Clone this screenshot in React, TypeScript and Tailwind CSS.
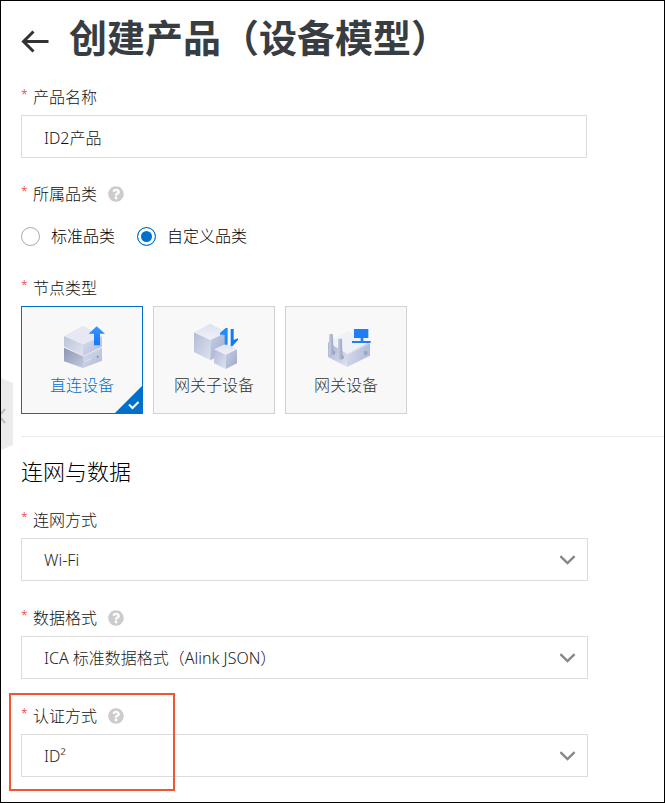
import { useState } from 'react';
import type { ReactNode } from 'react';
import { FaQuestionCircle } from 'react-icons/fa';

const ArrowLeft = () => (
  <svg width="28" height="24" viewBox="0 0 28 24" fill="none" stroke="#333" strokeWidth="3">
    <path d="M27.5 12.5H2.5M12.5 2.5L2.5 12.5l10 10" />
  </svg>
);

const DirectIcon = () => (
  <svg width="48" height="48" viewBox="144 66 144 144" className="overflow-visible">
    <defs>
      <linearGradient id="d-left" x1="0" y1="0" x2="1" y2="1">
        <stop offset="0" stopColor="#bcc4d9" />
        <stop offset="1" stopColor="#e0e4f0" />
      </linearGradient>
      <linearGradient id="d-right" x1="0" y1="0" x2="1" y2="1">
        <stop offset="0" stopColor="#dbe0ef" />
        <stop offset="1" stopColor="#aeb8d6" />
      </linearGradient>
      <linearGradient id="d-low" x1="0" y1="0" x2="1" y2="1">
        <stop offset="0" stopColor="#8c95b3" />
        <stop offset="1" stopColor="#c3cade" />
      </linearGradient>
      <linearGradient id="d-blue" x1="0" y1="0" x2="0" y2="1">
        <stop offset="0" stopColor="#3d95ff" />
        <stop offset="1" stopColor="#1477f5" />
      </linearGradient>
    </defs>
    <path d="M162 143l57 26v35l-57-20z" fill="url(#d-low)" />
    <path d="M276 143l-57 26v35l57-22z" fill="url(#d-right)" />
    <path d="M162 108l57 24v36l-57-28z" fill="url(#d-left)" />
    <path d="M276 108l-57 24v36l57-28z" fill="url(#d-right)" />
    <path d="M219 77l57 31-57 25-57-25z" fill="#e6e9f4" />
    <path d="M226 184l16-7" stroke="#eef1f8" strokeWidth="2" />
    <circle cx="263" cy="170" r="3" fill="#7f8bb0" />
    <path d="M260 79l25 22h-15v35h-18v-35h-16z" fill="url(#d-blue)" />
  </svg>
);

const SubDeviceIcon = () => (
  <svg width="48" height="48" viewBox="135 66 144 144" className="overflow-visible">
    <defs>
      <linearGradient id="s-left" x1="0" y1="0" x2="1" y2="1">
        <stop offset="0" stopColor="#b3bcd6" />
        <stop offset="1" stopColor="#dde2f0" />
      </linearGradient>
      <linearGradient id="s-right" x1="0" y1="0" x2="1" y2="1">
        <stop offset="0" stopColor="#c9d1e6" />
        <stop offset="1" stopColor="#9ba6c8" />
      </linearGradient>
      <linearGradient id="s-top" x1="0" y1="0" x2="0" y2="1">
        <stop offset="0" stopColor="#dde2f0" />
        <stop offset="1" stopColor="#eff1f8" />
      </linearGradient>
    </defs>
    <path d="M147 97l49 22v62l-49-25z" fill="url(#s-left)" />
    <path d="M244 97l-48 22v62l48-25z" fill="url(#s-right)" />
    <path d="M196 71l48 26-48 23-49-23z" fill="url(#s-top)" />
    <path d="M207 148l35 15v44l-35-17z" fill="url(#s-left)" />
    <path d="M276 148l-34 15v44l34-17z" fill="url(#s-right)" />
    <path d="M242 131l34 17-34 16-35-16z" fill="url(#s-top)" />
    <path d="M248 84v50h-9v-30h-14v-5l17-15z" fill="#1f8bff" />
    <path d="M257 87h9v33l13-5v5l-17 19h-5z" fill="#1479f5" />
  </svg>
);

const GatewayIcon = () => (
  <svg width="48" height="48" viewBox="132 66 144 144" className="overflow-visible">
    <defs>
      <linearGradient id="g-left" x1="0" y1="0" x2="1" y2="1">
        <stop offset="0" stopColor="#a9b2ce" />
        <stop offset="1" stopColor="#dfe3f1" />
      </linearGradient>
      <linearGradient id="g-right" x1="0" y1="0" x2="1" y2="0">
        <stop offset="0" stopColor="#cfd5e9" />
        <stop offset="1" stopColor="#b2bcda" />
      </linearGradient>
      <linearGradient id="g-ant" x1="0" y1="0" x2="1" y2="0">
        <stop offset="0" stopColor="#c9cfe2" />
        <stop offset="1" stopColor="#8a95b6" />
      </linearGradient>
    </defs>
    <path d="M150 126l57 35v40l-57-30z" fill="url(#g-left)" />
    <path d="M276 125l-69 36v40l69-34z" fill="url(#g-right)" />
    <path d="M211 93l65 32-69 36-57-35z" fill="#eff1f7" />
    <path d="M276 129l-69 36" stroke="#e8ebf5" strokeWidth="2" />
    <ellipse cx="263" cy="159" rx="6" ry="7" fill="#98a4c8" />
    <path d="M153 104q6-5 12 0l1 46q8 6 4 12-8 6-17 0z" fill="url(#g-ant)" />
    <path d="M180 118q6-5 12 0l1 46q7 6 3 12-8 5-16 0z" fill="url(#g-ant)" />
    <path d="M228 87h43v27h-15v9h22v6h-56v-6h26v-9h-20z" fill="#1f7df7" />
  </svg>
);

const nodeTypes = [
  { value: 'direct', label: '直连设备', icon: <DirectIcon /> },
  { value: 'sub', label: '网关子设备', icon: <SubDeviceIcon /> },
  { value: 'gateway', label: '网关设备', icon: <GatewayIcon /> },
];

const categories = [
  { value: 'standard', label: '标准品类' },
  { value: 'custom', label: '自定义品类' },
];

const LabelText = ({ children, help }: { children: ReactNode; help?: boolean }) => (
  <span className="flex h-6 items-center">
    <span className="w-3 pb-1 text-xs text-[#e8291b]">*</span>
    {children}
    {help && <FaQuestionCircle className="ml-[11px] size-4 text-[#ccc]" />}
  </span>
);

type SelectFieldProps = {
  id: string;
  label: string;
  option: string;
  help?: boolean;
};

const SelectField = ({ id, label, option, help }: SelectFieldProps) => (
  <div>
    <label htmlFor={id} className="block">
      <LabelText help={help}>{label}</LabelText>
    </label>
    <div className="mt-1.5 grid items-center">
      <select
        id={id}
        className="col-start-1 row-start-1 h-[43px] w-full appearance-none border border-[#dcdcdc] bg-white pr-10 pl-[22px] text-[#222] focus:outline-none"
      >
        <option>{option}</option>
      </select>
      <svg
        className="pointer-events-none col-start-1 row-start-1 mr-3 justify-self-end"
        width="16"
        height="10"
        viewBox="0 0 16 10"
        fill="none"
        stroke="#888"
        strokeWidth="2.4"
      >
        <path d="M0.4 1.2L7.5 8l7.1-6.8" />
      </svg>
    </div>
  </div>
);

const App = () => {
  const [name, setName] = useState('ID2产品');
  const [category, setCategory] = useState('custom');
  const [nodeType, setNodeType] = useState('direct');

  return (
    <main className="relative min-h-screen overflow-hidden border border-black bg-white pb-6 pl-5 font-['Noto_Sans','Noto_Sans_CJK_SC',sans-serif] text-base font-light text-[#111]">
      <button
        type="button"
        aria-label="收起"
        className="absolute top-[377px] left-0 h-[72px] w-3"
      >
        <svg width="12" height="72" viewBox="0 0 12 72" fill="none">
          <path d="M0 0l12 5v62L0 72z" fill="#ebebeb" />
          <path d="M4 31l-6 7 6 7" stroke="#bbb" strokeWidth="2" />
        </svg>
      </button>

      <header className="flex h-20 items-center gap-5">
        <button type="button" aria-label="返回">
          <ArrowLeft />
        </button>
        <h1 className="pb-2 text-[38px] leading-none font-bold text-[#373d41]">
          创建产品（设备模型）
        </h1>
      </header>

      <form>
        <div className="mt-1 pr-[77px]">
          <label htmlFor="name" className="block">
            <LabelText>产品名称</LabelText>
          </label>
          <input
            id="name"
            type="text"
            value={name}
            onChange={(e) => setName(e.target.value)}
            className="mt-1.5 block h-[43px] w-full border border-[#dcdcdc] px-[22px] focus:outline-none"
          />
        </div>

        <fieldset className="mt-6">
          <legend>
            <LabelText help>所属品类</LabelText>
          </legend>
          <div className="mt-[18px] flex gap-[22px] text-black">
            {categories.map((item) => (
              <label key={item.value} className="flex h-6 items-center gap-[11px]">
                <input
                  type="radio"
                  name="category"
                  checked={category === item.value}
                  onChange={() => setCategory(item.value)}
                  className="size-[19px] appearance-none rounded-full border border-[#aaa] bg-white checked:border-[#0070cc] checked:bg-[#0070cc] checked:ring-3 checked:ring-white checked:ring-inset"
                />
                {item.label}
              </label>
            ))}
          </div>
        </fieldset>

        <fieldset className="mt-7">
          <legend>
            <LabelText>节点类型</LabelText>
          </legend>
          <div className="mt-1.5 flex gap-2.5">
            {nodeTypes.map((item) => (
              <label
                key={item.value}
                className="relative flex h-[108px] w-[122px] flex-col items-center gap-[3px] border border-[#d2d2d2] bg-[#f8f8f8] pt-[15px] text-[#333] has-checked:border-[#0070cc] has-checked:text-[#0070cc]"
              >
                <input
                  type="radio"
                  name="nodeType"
                  checked={nodeType === item.value}
                  onChange={() => setNodeType(item.value)}
                  className="sr-only"
                />
                {item.icon}
                {item.label}
                {nodeType === item.value && (
                  <svg
                    className="absolute right-0 bottom-0"
                    width="27"
                    height="27"
                    viewBox="0 0 27 27"
                    fill="none"
                  >
                    <path d="M27 0v27H0z" fill="#0070cc" />
                    <path d="M14 18.5l3.5 3.5 6-6" stroke="#fff" strokeWidth="2" />
                  </svg>
                )}
              </label>
            ))}
          </div>
        </fieldset>

        <hr className="mt-[22px] border-[#ebebeb]" />

        <h2 className="mt-[18px] text-[22px] leading-8 text-black">连网与数据</h2>

        <div className="mt-[21px] flex flex-col gap-[25px] pr-[76px]">
          <SelectField id="network" label="连网方式" option="Wi-Fi" />
          <SelectField id="format" label="数据格式" option="ICA 标准数据格式（Alink JSON）" help />
          <div className="relative">
            <SelectField id="auth" label="认证方式" option="ID²" help />
            <div className="pointer-events-none absolute -top-[11px] -left-3 h-[98px] w-[166px] border-2 border-[#f0562f]" />
          </div>
        </div>
      </form>
    </main>
  );
};

export default App;
